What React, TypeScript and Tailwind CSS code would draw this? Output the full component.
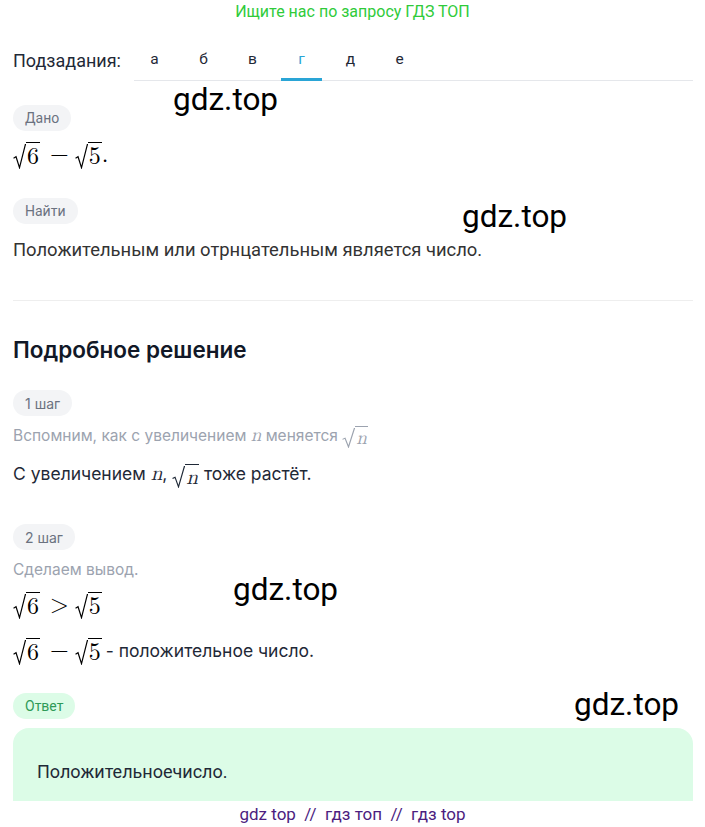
import React from "react";

const serif = { fontFamily: '"Latin Modern Math","Liberation Serif","DejaVu Serif",serif' };

function Radical({ h = 22 }: { h?: number }) {
  return (
    <svg width={13} height={h} viewBox="0 0 12 22" preserveAspectRatio="none" className="shrink-0 block">
      <path d="M0.5 12.5 L2.8 11.2 L6 20.8 L11.4 0.6 L12 0.6" fill="none" stroke="currentColor" strokeWidth={1.1} strokeLinejoin="miter" />
    </svg>
  );
}

function Sqrt({ children, h = 22, italic = false }: { children: React.ReactNode; h?: number; italic?: boolean }) {
  return (
    <span className="inline-flex items-end align-middle">
      <Radical h={h} />
      <span
        className={"border-t-[1.1px] border-current leading-none pt-[2px] pl-[1px] pr-[1px] " + (italic ? "italic" : "")}
        style={serif}
      >
        {children}
      </span>
    </span>
  );
}

function Pill({ children, green = false }: { children: React.ReactNode; green?: boolean }) {
  return (
    <div
      className={
        "inline-flex h-[26px] items-center rounded-[13px] px-[12px] text-[14px] " +
        (green ? "bg-[#dcfce7] text-[#2f9a57]" : "bg-[#f3f4f6] text-[#6b7280]")
      }
    >
      {children}
    </div>
  );
}

function Watermark({ className }: { className: string }) {
  return (
    <div
      className={"absolute text-[31.5px] leading-none text-black " + className}
      style={{ fontFamily: "Roboto, sans-serif" }}
    >
      gdz.top
    </div>
  );
}

function MathLine({ op, tail, className }: { op: string; tail?: React.ReactNode; className: string }) {
  return (
    <div className={"flex h-[26px] items-center text-[24px] text-black " + className}>
      <Sqrt h={25}>6</Sqrt>
      <span className="ml-[10px] mr-[6px]" style={serif}>{op}</span>
      <Sqrt h={25}>5</Sqrt>
      {tail}
    </div>
  );
}

export default function App() {
  const tabs = ["а", "б", "в", "г", "д", "е"];
  const inter = { fontFamily: "Inter, sans-serif" };
  return (
    <div
      className="relative h-[827px] w-[705px] overflow-hidden bg-white"
      style={{ fontFamily: "Roboto, 'Noto Sans', sans-serif" }}
    >
      <div className="flex h-[24px] items-center justify-center text-[16px] text-[#2fcb3a]">
        Ищите нас по запросу ГДЗ ТОП
      </div>

      <div className="mt-[16px] flex h-[41px] pl-[13px] pr-[12px]">
        <div className="flex w-[121px] items-center pb-[1px] text-[18px] text-[#1f2937]">Подзадания:</div>
        <div className="flex flex-1 gap-[8px] border-b border-[#e5e7eb]">
          {tabs.map((t) => (
            <div
              key={t}
              className={
                "relative flex h-full w-[41px] items-center justify-center text-[15.5px] " +
                (t === "г" ? "text-[#2aa5d6]" : "text-[#1f2937]")
              }
            >
              {t}
              {t === "г" && <span className="absolute bottom-[-1px] left-0 h-[3px] w-full bg-[#2aa5d6]" />}
            </div>
          ))}
        </div>
      </div>

      <div className="pl-[13px] pr-[12px]">
        <div className="mt-[24px]">
          <Pill>Дано</Pill>
        </div>
        <MathLine className="mt-[11px]" op="−" tail={<span style={serif}>.</span>} />
        <div className="mt-[30px]">
          <Pill>Найти</Pill>
        </div>
        <div className="mt-[14px] flex h-[24px] items-center text-[18.4px] text-[#333]">
          Положительным или отрнцательным является число.
        </div>
        <div className="mt-[38px] h-px bg-[#eeeeee]" />
        <div className="mt-[34px] flex h-[30px] items-center text-[22.5px] font-semibold text-[#111827]" style={inter}>
          Подробное решение
        </div>
        <div className="mt-[25px]" style={inter}>
          <Pill>1 шаг</Pill>
        </div>
        <div className="mt-[9px] flex h-[22px] items-center text-[15.5px] text-[#9ca3af]" style={inter}>
          Вспомним, как с увеличением&nbsp;
          <span className="text-[19px] italic" style={serif}>n</span>
          &nbsp;меняется&nbsp;
          <span className="text-[19px]"><Sqrt h={20} italic>n</Sqrt></span>
        </div>
        <div className="mt-[15px] flex h-[24px] items-center text-[17.5px] text-[#1f2937]" style={inter}>
          С увеличением&nbsp;
          <span className="text-[21px] italic" style={serif}>n</span>,&nbsp;
          <span className="text-[21px]"><Sqrt h={22} italic>n</Sqrt></span>
          &nbsp;тоже растёт.
        </div>
        <div className="mt-[38px]" style={inter}>
          <Pill>2 шаг</Pill>
        </div>
        <div className="mt-[9px] flex h-[22px] items-center text-[15.5px] text-[#9ca3af]" style={inter}>
          Сделаем вывод.
        </div>
        <MathLine className="mt-[11px]" op=">" />
        <MathLine
          className="mt-[20px]"
          op="−"
          tail={
            <span className="ml-[4px] text-[17.5px] text-[#1f2937]" style={inter}>
              - положительное число.
            </span>
          }
        />
        <div className="mt-[29px]">
          <Pill green>Ответ</Pill>
        </div>
        <div className="mt-[9px] flex h-[73px] items-center rounded-t-[16px] bg-[#dcfce7] pl-[24px] pt-[14px] text-[18px] text-[#1f2937]">
          Положительноечисло.
        </div>
      </div>

      <div className="flex h-[27px] items-center justify-center text-[17px] text-[#4c1d7f]">
        gdz top&nbsp;&nbsp;//&nbsp;&nbsp;гдз топ&nbsp;&nbsp;//&nbsp;&nbsp;гдз top
      </div>

      <Watermark className="left-[173px] top-[84px]" />
      <Watermark className="left-[462px] top-[201px]" />
      <Watermark className="left-[233px] top-[574px]" />
      <Watermark className="left-[574px] top-[689px]" />
    </div>
  );
}
